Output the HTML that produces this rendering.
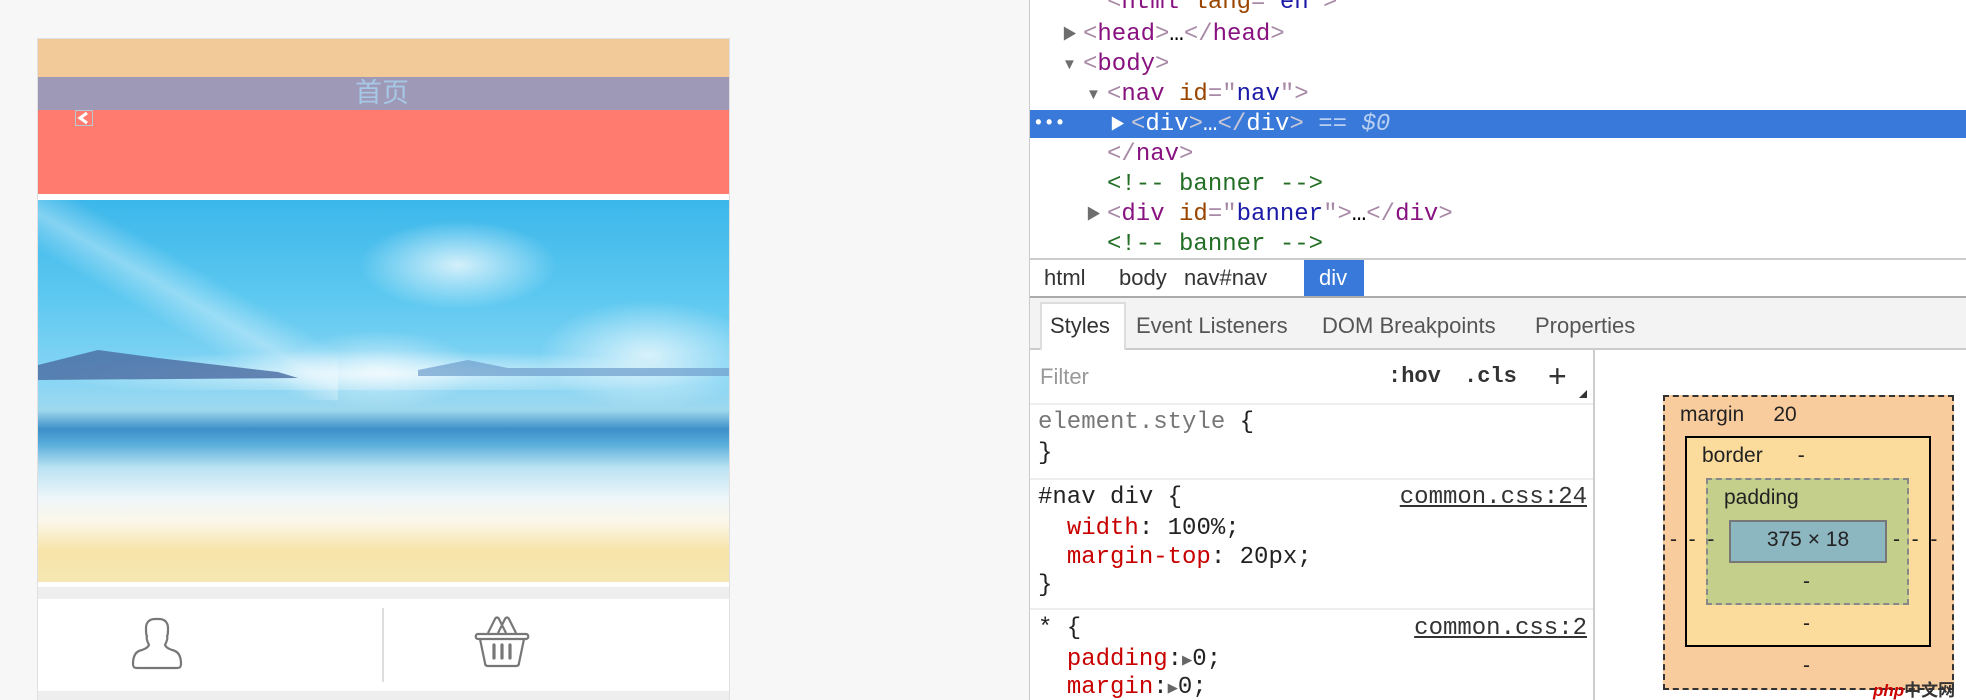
<!DOCTYPE html>
<html style="overflow:hidden"><head><meta charset="utf-8">
<style>
*{margin:0;padding:0;box-sizing:border-box}
html,body{width:1966px;height:700px;overflow:hidden}
body{background:#f7f7f7;position:relative;font-family:"Liberation Sans","Noto Sans CJK SC",sans-serif}
.a{position:absolute}
.mono{font-family:"Liberation Mono","DejaVu Sans Mono",monospace;font-size:24px;white-space:pre;line-height:30px}
.t{color:#881280}.b{color:#a889a6}.an{color:#994500}.av{color:#1a1aa6}.cm{color:#236e25}
.tri{position:absolute;font-size:15px;color:#6e6e6e;line-height:30px}
.sans{font-family:"Liberation Sans",sans-serif;white-space:pre}
.pr{color:#c80000}
</style></head><body>
<!-- phone -->
<div class="a" style="left:37px;top:38px;width:693px;height:662px;background:#fff;border:1px solid #e0e0e0;"></div>
<div class="a" style="left:38px;top:39px;width:691px;height:38px;background:#f2c999"></div>
<div class="a" style="left:38px;top:77px;width:691px;height:33px;background:#9e99b7"></div>
<div class="a" style="left:355px;top:76px;font-size:27px;color:#a6c8e6;line-height:34px">首页</div>
<div class="a" style="left:38px;top:110px;width:691px;height:84px;background:#ff7b6f"></div>
<div class="a" style="left:75px;top:110px;width:18px;height:16px;border:1px solid #b8c8d0;background:#ff7b6f"><svg width="16" height="14" style="display:block"><path d="M11 2 L4 7 L11 12" stroke="#fff" stroke-width="3" fill="none"/></svg></div>
<div class="a" style="left:38px;top:200px;width:691px;height:382px;overflow:hidden;background:linear-gradient(180deg,#3cb7ea 0%,#5cc8f0 25%,#8ad6f4 48%,#9ed8ee 55%,#3d8fc8 60%,#5aaedc 64%,#b9e2f2 70%,#eef6fa 78%,#fbf7ea 84%,#f7e4a8 92%,#f6e6b2 100%)">
<div class="a" style="left:0;top:150px;width:691px;height:40px;background:radial-gradient(ellipse at 50% 60%,rgba(255,255,255,.7),rgba(255,255,255,0) 70%)"></div>
<div class="a" style="left:320px;top:20px;width:200px;height:90px;background:radial-gradient(ellipse,rgba(255,255,255,.75),rgba(255,255,255,0) 70%)"></div>
<div class="a" style="left:500px;top:100px;width:220px;height:110px;background:radial-gradient(ellipse,rgba(255,255,255,.7),rgba(255,255,255,0) 70%)"></div>
<div class="a" style="left:240px;top:130px;width:200px;height:80px;background:radial-gradient(ellipse,rgba(255,255,255,.6),rgba(255,255,255,0) 70%)"></div>
<div class="a" style="left:0;top:0;width:300px;height:200px;background:linear-gradient(30deg,rgba(255,255,255,0) 40%,rgba(255,255,255,.35) 50%,rgba(255,255,255,0) 60%)"></div>
<svg class="a" style="left:0;top:0" width="691" height="382"><path d="M0 165 L60 150 L120 158 L180 165 L240 172 L260 178 L0 180Z" fill="#4a6aa0" opacity=".8"/><path d="M380 170 L430 160 L470 168 L691 168 L691 176 L380 176Z" fill="#6d9ccc" opacity=".7"/></svg>
</div>
<div class="a" style="left:38px;top:587px;width:691px;height:12px;background:#eeeeee"></div>
<div class="a" style="left:38px;top:691px;width:691px;height:9px;background:#eeeeee"></div>
<div class="a" style="left:382px;top:608px;width:2px;height:74px;background:#ddd"></div>
<svg class="a" style="left:128px;top:616px" width="60" height="56"><path d="M27 3 C20 3 18 8 18 12 C18 16 18 19 19 20 C18 22 19 25 21 29 C20 31 19 32 14 34 C8 35 5 40 5 48 C5 51 6 52 9 52 L49 52 C52 52 53 51 53 48 C53 40 50 35 44 34 C39 32 38 31 37 29 C39 25 40 22 39 20 C40 19 40 16 40 12 C40 8 38 3 31 3Z" fill="none" stroke="#777" stroke-width="2.2" stroke-linejoin="round"/></svg>
<svg class="a" style="left:474px;top:616px" width="60" height="54"><path d="M4 18 L52 18 C55 18 55 23 52 23 L4 23 C1 23 1 18 4 18Z M6 23 L11 47 C11 49 12 50 14 50 L42 50 C44 50 45 49 45 47 L50 23 M14 17 L21 3 C22 1 24 1 25 3 L32 17 M24 17 L31 3 C32 1 34 1 35 3 L42 17" fill="none" stroke="#777" stroke-width="2.2" stroke-linejoin="round"/><path d="M20 29 V42 M28 29 V42 M36 29 V42" stroke="#777" stroke-width="3.2" stroke-linecap="round"/></svg>

<!-- devtools -->
<div class="a" style="left:1029px;top:0;width:937px;height:700px;background:#fff;border-left:1px solid #ccc"></div>
<div class="a" style="left:1030px;top:110px;width:936px;height:28px;background:#3879d9"></div>
<div class="a mono" style="left:1107px;top:-12px"><span class="b">&lt;</span><span class="t">html </span><span class="an">lang</span><span class="b">="</span><span class="av">en</span><span class="b">"&gt;</span></div>
<div class="tri" style="left:1062px;top:20px">▶</div>
<div class="a mono" style="left:1083px;top:20px"><span class="b">&lt;</span><span class="t">head</span><span class="b">&gt;</span>…<span class="b">&lt;/</span><span class="t">head</span><span class="b">&gt;</span></div>
<div class="tri" style="left:1062px;top:50px">▼</div>
<div class="a mono" style="left:1083px;top:50px"><span class="b">&lt;</span><span class="t">body</span><span class="b">&gt;</span></div>
<div class="tri" style="left:1086px;top:80px">▼</div>
<div class="a mono" style="left:1107px;top:80px"><span class="b">&lt;</span><span class="t">nav </span><span class="an">id</span><span class="b">="</span><span class="av">nav</span><span class="b">"&gt;</span></div>
<div class="a mono" style="left:1033px;top:109px;color:#fff;font-size:18px;font-weight:bold">•••</div>
<div class="tri" style="left:1110px;top:110px;color:#fff">▶</div>
<div class="a mono" style="left:1131px;top:110px;color:#fff"><span style="color:#c8c8d8">&lt;</span>div<span style="color:#c8c8d8">&gt;</span>…<span style="color:#c8c8d8">&lt;/</span>div<span style="color:#c8c8d8">&gt;</span> <span style="color:#b8cff0">== <i>$0</i></span></div>
<div class="a mono" style="left:1107px;top:140px"><span class="b">&lt;/</span><span class="t">nav</span><span class="b">&gt;</span></div>
<div class="a mono cm" style="left:1107px;top:170px">&lt;!-- banner --&gt;</div>
<div class="tri" style="left:1086px;top:200px">▶</div>
<div class="a mono" style="left:1107px;top:200px"><span class="b">&lt;</span><span class="t">div </span><span class="an">id</span><span class="b">="</span><span class="av">banner</span><span class="b">"&gt;</span>…<span class="b">&lt;/</span><span class="t">div</span><span class="b">&gt;</span></div>
<div class="a mono cm" style="left:1107px;top:230px">&lt;!-- banner --&gt;</div>

<div class="a" style="left:1030px;top:258px;width:936px;height:2px;background:#ccc"></div>
<div class="a" style="left:1030px;top:260px;width:936px;height:36px;background:#fff"></div>
<div class="a" style="left:1304px;top:260px;width:60px;height:36px;background:#3879d9"></div>
<div class="a sans" style="left:1044px;top:260px;line-height:36px;font-size:22px;color:#333">html</div>
<div class="a sans" style="left:1119px;top:260px;line-height:36px;font-size:22px;color:#333">body</div>
<div class="a sans" style="left:1184px;top:260px;line-height:36px;font-size:22px;color:#333">nav#nav</div>
<div class="a sans" style="left:1319px;top:260px;line-height:36px;font-size:22px;color:#fff">div</div>
<div class="a" style="left:1030px;top:296px;width:936px;height:54px;background:#f3f3f3;border-top:2px solid #aaa;border-bottom:2px solid #ccc"></div>
<div class="a" style="left:1040px;top:302px;width:86px;height:48px;background:#fff;border:2px solid #ddd;border-bottom:none"></div>
<div class="a sans" style="left:1050px;top:306px;line-height:40px;font-size:22px;color:#333">Styles</div>
<div class="a sans" style="left:1136px;top:306px;line-height:40px;font-size:22px;color:#555">Event Listeners</div>
<div class="a sans" style="left:1322px;top:306px;line-height:40px;font-size:22px;color:#555">DOM Breakpoints</div>
<div class="a sans" style="left:1535px;top:306px;line-height:40px;font-size:22px;color:#555">Properties</div>
<div class="a" style="left:1593px;top:350px;width:2px;height:350px;background:#ccc"></div>
<div class="a sans" style="left:1040px;top:360px;font-size:22px;color:#999;line-height:34px">Filter</div>
<div class="a mono" style="left:1388px;top:362px;font-size:22px;font-weight:bold;color:#333">:hov</div>
<div class="a mono" style="left:1464px;top:362px;font-size:22px;font-weight:bold;color:#333">.cls</div>
<div class="a sans" style="left:1548px;top:356px;font-size:32px;color:#333;line-height:40px">+</div>
<div class="a" style="left:1579px;top:390px;width:0;height:0;border-left:8px solid transparent;border-bottom:8px solid #333"></div>
<div class="a" style="left:1030px;top:403px;width:563px;height:2px;background:#eee"></div>
<div class="a" style="left:1030px;top:478px;width:563px;height:2px;background:#eee"></div>
<div class="a" style="left:1030px;top:608px;width:563px;height:2px;background:#eee"></div>
<div class="a mono" style="left:1038px;top:408px;color:#222;line-height:29px"><span style="color:#777">element.style</span> {</div>
<div class="a mono" style="left:1038px;top:439px;color:#222;line-height:29px">}</div>
<div class="a mono" style="left:1038px;top:483px;color:#222;line-height:29px">#nav div {</div>
<div class="a mono" style="left:1038px;top:514px;color:#222;line-height:29px">  <span class="pr">width</span>: 100%;</div>
<div class="a mono" style="left:1038px;top:543px;color:#222;line-height:29px">  <span class="pr">margin-top</span>: 20px;</div>
<div class="a mono" style="left:1038px;top:571px;color:#222;line-height:29px">}</div>
<div class="a mono" style="left:1038px;top:614px;color:#222;line-height:29px">* {</div>
<div class="a mono" style="left:1038px;top:645px;color:#222;line-height:29px">  <span class="pr">padding</span>:<span style="color:#666;font-size:17px">▶</span>0;</div>
<div class="a mono" style="left:1038px;top:673px;color:#222;line-height:29px">  <span class="pr">margin</span>:<span style="color:#666;font-size:17px">▶</span>0;</div>
<div class="a mono" style="left:1380px;top:483px;width:207px;text-align:right;color:#333;text-decoration:underline;line-height:29px">common.css:24</div>
<div class="a mono" style="left:1380px;top:614px;width:207px;text-align:right;color:#333;text-decoration:underline;line-height:29px">common.css:2</div>
<!-- box model -->
<div class="a" style="left:1663px;top:395px;width:291px;height:295px;background:#f9cc9d;border:2px dashed #333"></div>
<div class="a" style="left:1685px;top:436px;width:246px;height:211px;background:#fbdc9c;border:2px solid #000"></div>
<div class="a" style="left:1706px;top:478px;width:203px;height:127px;background:#c3cf8b;border:2px dashed #888"></div>
<div class="a" style="left:1729px;top:520px;width:158px;height:43px;background:#8cb6c0;border:2px solid #777"></div>
<div class="a sans" style="left:1680px;top:403px;font-size:21px;color:#222">margin     20</div>
<div class="a sans" style="left:1702px;top:444px;font-size:21px;color:#222">border      -</div>
<div class="a sans" style="left:1724px;top:486px;font-size:21px;color:#222">padding</div>
<div class="a sans" style="left:1729px;top:528px;width:158px;text-align:center;font-size:21px;color:#222">375 × 18</div>
<div class="a sans" style="left:1803px;top:570px;font-size:21px;color:#222">-</div>
<div class="a sans" style="left:1803px;top:612px;font-size:21px;color:#222">-</div>
<div class="a sans" style="left:1803px;top:654px;font-size:21px;color:#222">-</div>
<div class="a sans" style="left:1670px;top:528px;font-size:21px;color:#222">-  -  -</div>
<div class="a sans" style="left:1893px;top:528px;font-size:21px;color:#222">-  -  -</div>
<div class="a sans" style="left:1873px;top:676px;font-size:17px;color:#c00;font-style:italic;font-weight:bold">php<span style="color:#333;font-style:normal;font-family:'Noto Sans CJK SC',sans-serif">中文网</span></div>
</body></html>
